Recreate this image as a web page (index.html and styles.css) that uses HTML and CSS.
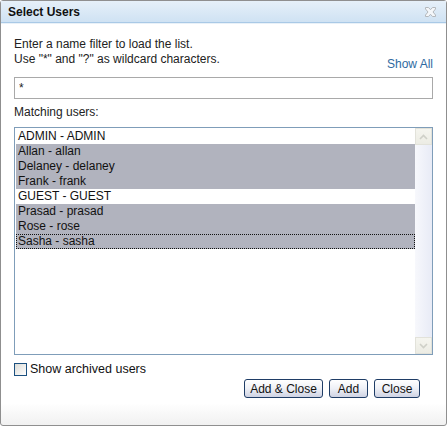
FILE: index.html
```html
<!DOCTYPE html>
<html lang="en">
<head>
  <meta charset="UTF-8">
  <title>Select Users</title>
  <link rel="stylesheet" href="styles.css">
</head>
<body>
  <div class="dialog">
    <div class="titlebar">
      <span class="title">Select Users</span>
      <svg class="close" width="13" height="12" viewBox="0 0 13 12">
        <path d="M1.5 1.5h3l2 2.2 2-2.2h3v1.5l-2.5 3 2.5 3v1.5h-3l-2-2.2-2 2.2h-3V9l2.5-3L1.5 3z" fill="#f4f7fa" stroke="#b4b8bc" stroke-width="1"/>
      </svg>
    </div>

    <div class="content">
      <div class="intro">
        <p class="hint">Enter a name filter to load the list.<br>Use "*" and "?" as wildcard characters.</p>
        <a class="show-all" href="#">Show All</a>
      </div>

      <input class="filter" type="text" value="*">

      <div class="label">Matching users:</div>

      <div class="listbox">
        <ul class="options">
          <li>ADMIN - ADMIN</li>
          <li class="selected">Allan - allan</li>
          <li class="selected">Delaney - delaney</li>
          <li class="selected">Frank - frank</li>
          <li>GUEST - GUEST</li>
          <li class="selected">Prasad - prasad</li>
          <li class="selected">Rose - rose</li>
          <li class="selected focused">Sasha - sasha</li>
        </ul>
        <div class="scrollbar">
          <div class="scroll-btn">
            <svg width="9" height="6" viewBox="0 0 9 6"><path d="M1 5l3.5-3.5L8 5" fill="none" stroke="#cfd0c8" stroke-width="1.6"/></svg>
          </div>
          <div class="scroll-btn">
            <svg width="9" height="6" viewBox="0 0 9 6"><path d="M1 1l3.5 3.5L8 1" fill="none" stroke="#cfd0c8" stroke-width="1.6"/></svg>
          </div>
        </div>
      </div>

      <label class="archived">
        <span class="checkbox"></span>
        Show archived users
      </label>

      <div class="buttons">
        <button class="btn-add-close">Add &amp; Close</button>
        <button class="btn-add">Add</button>
        <button class="btn-close">Close</button>
      </div>
    </div>
  </div>
</body>
</html>
```

FILE: styles.css
```css
body {
  margin: 0;
  font-family: "Liberation Sans", Arial, sans-serif;
  font-size: 12px;
  color: #222;
  background: #fff;
}

.dialog {
  width: 447px;
  height: 426px;
  box-sizing: border-box;
  border: 1px solid #8f8f8f;
  border-radius: 3px;
  background: linear-gradient(to bottom, #fff 0, #fff 402px, #f1f1f1 100%);
  display: flex;
  flex-direction: column;
}

.titlebar {
  height: 21px;
  display: flex;
  align-items: center;
  justify-content: space-between;
  padding: 0 9px 0 7px;
  background: linear-gradient(to bottom, #e6f0f9, #cfe2f3);
  border-bottom: 1px solid #a9c9e6;
  box-shadow: 0 1px 0 #e9f1f8;
}

.title {
  font-weight: bold;
  font-size: 12px;
  color: #111;
}

.close {
  display: block;
}

.content {
  padding: 14px 13px 0 13px;
}

.intro {
  display: flex;
  justify-content: space-between;
  align-items: flex-end;
}

.hint {
  margin: 0;
  line-height: 15px;
  color: #222;
}

.show-all {
  color: #2f6aa1;
  text-decoration: none;
  margin-bottom: -4px;
}

.filter {
  display: block;
  width: 100%;
  box-sizing: border-box;
  height: 22px;
  margin-top: 10px;
  padding: 0 4px;
  border: 1px solid #a9a9a9;
  font-family: inherit;
  font-size: 12px;
  color: #222;
}

.label {
  margin-top: 6px;
  line-height: 15px;
  color: #222;
}

.listbox {
  margin-top: 7px;
  height: 228px;
  box-sizing: border-box;
  border: 1px solid #7f9db9;
  padding: 1px 0 0 1px;
  display: flex;
}

.options {
  list-style: none;
  margin: 0;
  padding: 0;
  flex: 1;
}

.options li {
  height: 15px;
  line-height: 15px;
  padding-left: 2px;
  font-size: 12px;
  color: #111;
  box-sizing: border-box;
}

.options li.selected {
  background: #b1b3be;
}

.options li.focused {
  outline: 1px dotted #111;
  outline-offset: -1px;
}

.scrollbar {
  width: 17px;
  margin-top: -1px;
  display: flex;
  flex-direction: column;
  justify-content: space-between;
  background: linear-gradient(to right, #f7f8fc, #e8ebf6);
}

.scroll-btn {
  height: 17px;
  box-sizing: border-box;
  border: 1px solid #e2e2da;
  background: linear-gradient(to bottom, #f5f5ef, #ecece4);
  display: flex;
  align-items: center;
  justify-content: center;
}

.scroll-btn svg {
  display: block;
}

.archived {
  display: flex;
  align-items: center;
  gap: 3px;
  margin-top: 7px;
  font-size: 12.5px;
  color: #111;
}

.checkbox {
  width: 13px;
  height: 13px;
  box-sizing: border-box;
  border: 1px solid #1c5180;
  background: linear-gradient(135deg, #dcdcd7, #fff);
}

.buttons {
  display: flex;
  justify-content: flex-end;
  gap: 6px;
  margin-top: 3px;
  padding-right: 13px;
}

.buttons button {
  height: 19px;
  padding: 0;
  border: 1px solid #1f3d66;
  border-radius: 3px;
  background: linear-gradient(to bottom, #fff 0, #eef0f6 50%, #cfd3e3 100%);
  font-family: inherit;
  font-size: 12px;
  color: #111;
}

.btn-add-close {
  width: 79px;
}

.btn-add {
  width: 39px;
}

.btn-close {
  width: 46px;
}
```
